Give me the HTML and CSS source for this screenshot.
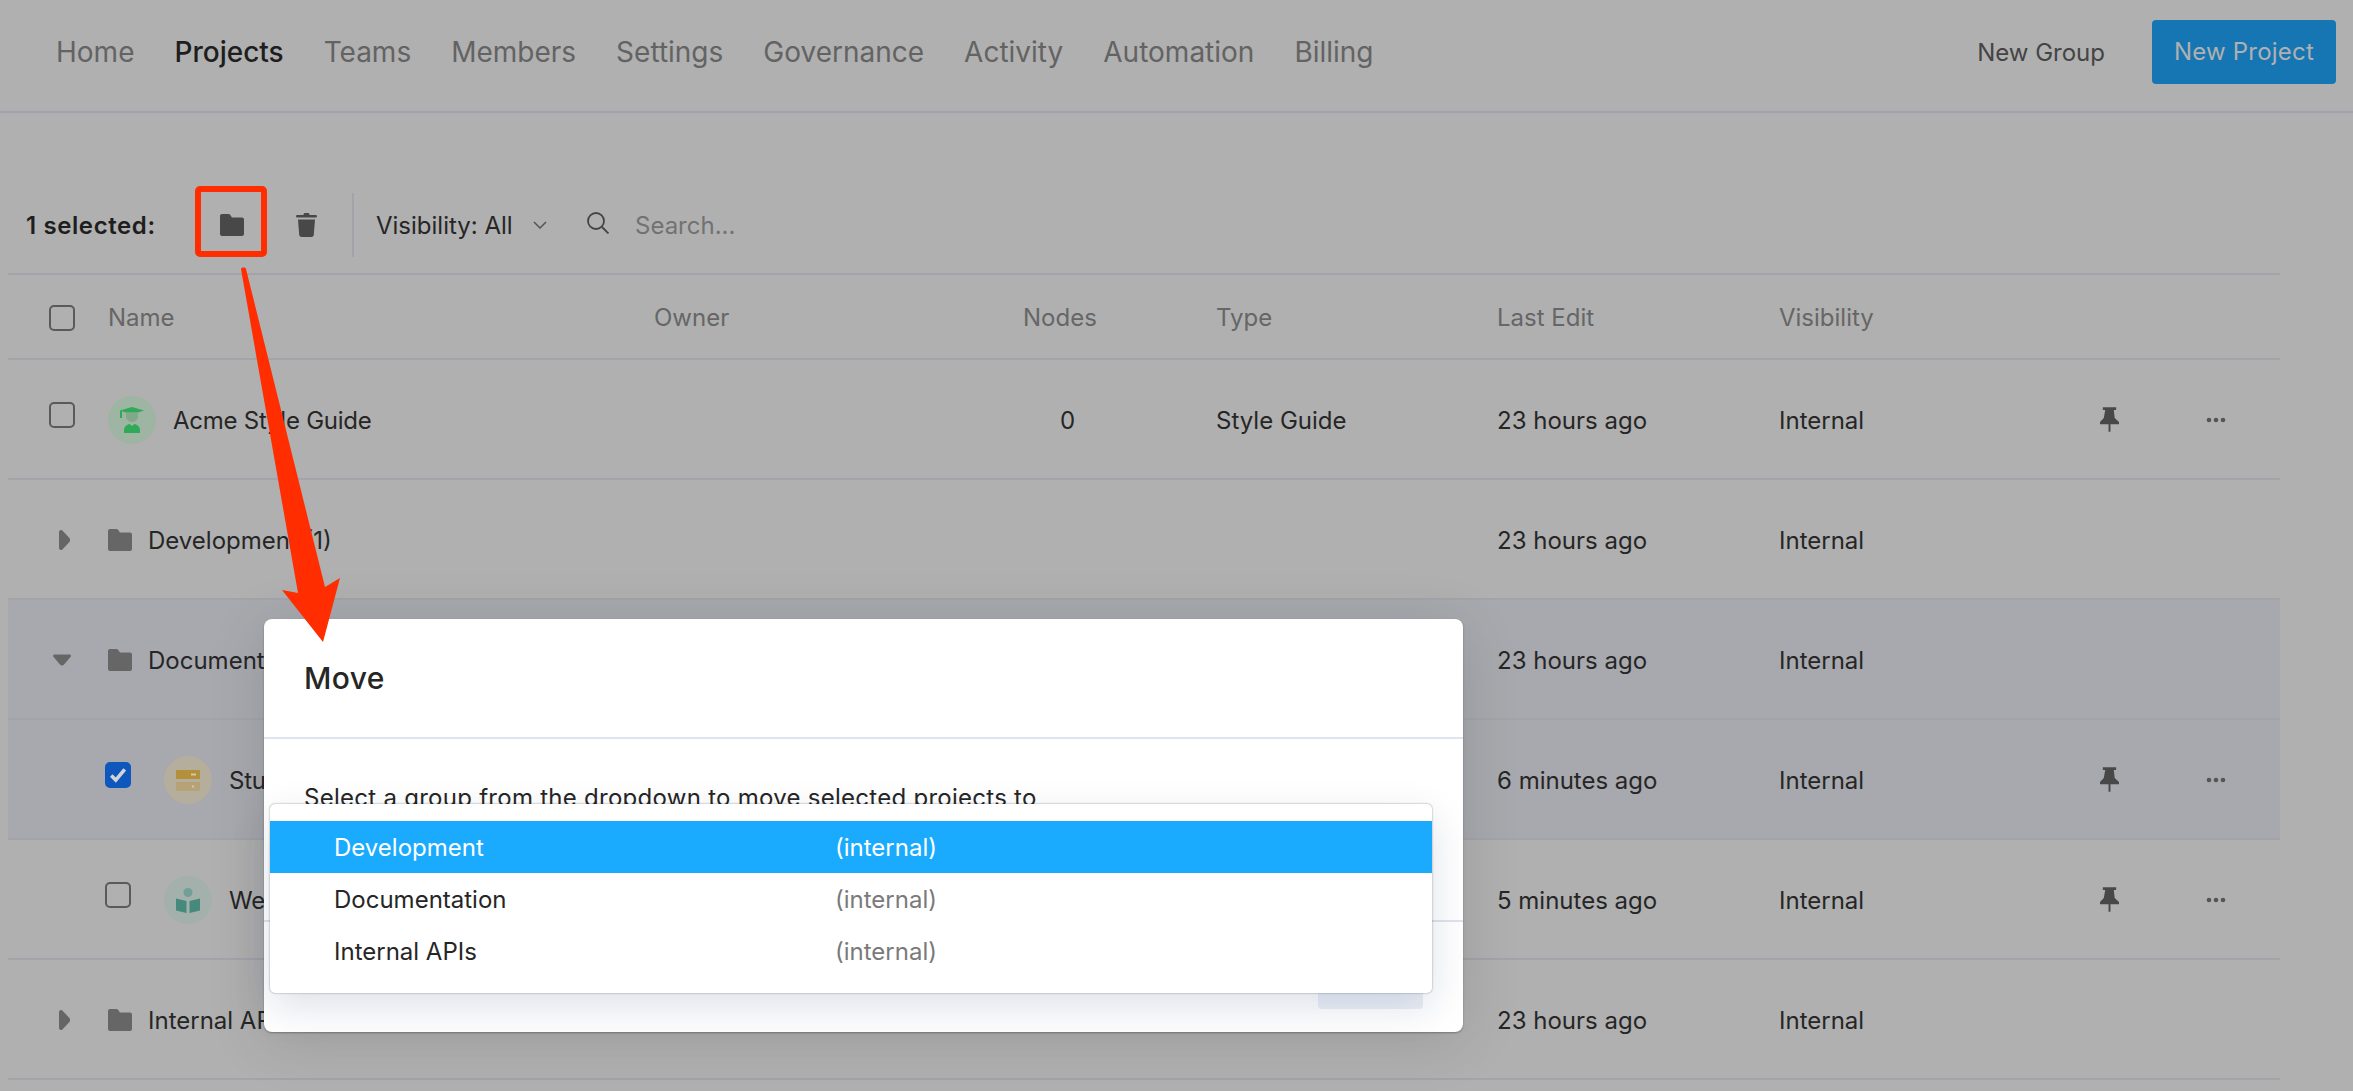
FILE: index.html
```html
<!DOCTYPE html>
<html lang="en">
<head>
    <meta charset="UTF-8">
    <title>Projects</title>
    <link rel="stylesheet" href="styles.css">
</head>
<body>
<svg class="icon-defs" aria-hidden="true">
    <symbol id="folder" viewBox="0 0 24 22"><path d="M2 0h6.500c.7 0 1.200.3 1.600.8L12 3.500h10c1.100 0 2 .9 2 2V20c0 1.100-.9 2-2 2H2c-1.100 0-2-.9-2-2V2C0 .9.900 0 2 0z"/></symbol>
    <symbol id="pin" viewBox="0 0 20 26"><path d="M3 0h14v3h-2.500l1 8.500L20 15.500V18H0v-2.500l4-4L5.500 3H3zM9 18h2v8H9z"/></symbol>
    <symbol id="caret-right" viewBox="0 0 11 20"><path d="M2 0c.5 0 1 .2 1.400.6l7 7.500c1 1.100 1 2.700 0 3.800l-7 7.500c-.4.4-.9.6-1.400.6-1.100 0-2-.9-2-2V2C0 .9.900 0 2 0z"/></symbol>
    <symbol id="caret-down" viewBox="0 0 20 12"><path d="M1.500 0h17c1.200 0 1.900 1.400 1.100 2.400l-7.500 8.800c-1.100 1.100-3.100 1.100-4.200 0L.4 2.400C-.4 1.400.300 0 1.500 0z"/></symbol>
    <symbol id="dots" viewBox="0 0 20 6"><circle cx="3" cy="3" r="2.300"/><circle cx="10" cy="3" r="2.300"/><circle cx="17" cy="3" r="2.300"/></symbol>
</svg>

<header class="topnav">
    <nav class="topnav-links">
        <a>Home</a>
        <a class="active">Projects</a>
        <a>Teams</a>
        <a>Members</a>
        <a>Settings</a>
        <a>Governance</a>
        <a>Activity</a>
        <a>Automation</a>
        <a>Billing</a>
    </nav>
    <div class="topnav-actions">
        <a class="btn-link">New Group</a>
        <a class="btn-primary">New Project</a>
    </div>
</header>

<main class="content">
    <div class="toolbar">
        <span class="selected-count">1 selected:</span>
        <svg class="icon tool-folder"><use href="#folder"/></svg>
        <svg class="tool-trash" viewBox="0 0 21 24"><path d="M7.500 1.500C7.500.7 8.200 0 9 0h3c.8 0 1.500.7 1.500 1.500V2h6c.8 0 1.500.5 1.500 1.200S20.300 4.500 19.500 4.500h-18C.7 4.500 0 3.900 0 3.200S.7 2 1.500 2h6zM2 6.500h17l-1.200 15.300c-.1 1.300-1 2.200-2.300 2.200H5.500c-1.300 0-2.200-.9-2.300-2.200z"/></svg>
        <span class="tool-divider"></span>
        <span class="visibility">Visibility: All</span>
        <svg class="chevron" viewBox="0 0 14 8"><path d="M1 1l6 6 6-6"/></svg>
        <svg class="search-icon" viewBox="0 0 22 22"><circle cx="9" cy="9" r="8"/><path d="M15 15l6.500 6.500"/></svg>
        <span class="search-placeholder">Search...</span>
    </div>

    <div class="row row-head">
        <div class="name-cell"><span class="check"></span><span class="head-name">Name</span></div>
        <div>Owner</div>
        <div>Nodes</div>
        <div>Type</div>
        <div>Last Edit</div>
        <div>Visibility</div>
    </div>

    <div class="row">
        <div class="name-cell">
            <span class="check"></span>
            <span class="avatar avatar-green">
                <svg viewBox="0 0 24 26"><path class="grad-face" d="M6 6h12v3c0 3.500-2.600 6-6 6S6 12.500 6 9z"/><path class="grad-main" d="M0 3.500L12 0l12 3.500L18 5.500H6L2 4.300V11H0zM4 26v-3c0-3.200 3-5.500 5.500-6l2.500 2 2.500-2c2.500.5 5.500 2.800 5.500 6v3z"/></svg>
            </span>
            <span class="avatar-name">Acme Style Guide</span>
        </div>
        <div></div>
        <div class="nodes">0</div>
        <div>Style Guide</div>
        <div>23 hours ago</div>
        <div>Internal</div>
        <svg class="icon pin"><use href="#pin"/></svg>
        <svg class="icon dots"><use href="#dots"/></svg>
    </div>

    <div class="row">
        <div class="name-cell">
            <svg class="icon caret-right"><use href="#caret-right"/></svg>
            <svg class="icon folder"><use href="#folder"/></svg>
            <span>Development (1)</span>
        </div>
        <div></div><div></div><div></div>
        <div>23 hours ago</div>
        <div>Internal</div>
    </div>

    <div class="row row-selected">
        <div class="name-cell">
            <svg class="icon caret-down"><use href="#caret-down"/></svg>
            <svg class="icon folder"><use href="#folder"/></svg>
            <span>Documentation (1)</span>
        </div>
        <div></div><div></div><div></div>
        <div>23 hours ago</div>
        <div>Internal</div>
    </div>

    <div class="row row-selected">
        <div class="name-cell nested">
            <span class="check checked">
                <svg viewBox="0 0 16 14"><path d="M2 7.500l4 4L14 2"/></svg>
            </span>
            <span class="avatar avatar-amber">
                <svg viewBox="0 0 24 21"><rect class="srv-top" width="24" height="9" rx="1"/><rect class="srv-bottom" y="12" width="24" height="9" rx="1"/><path class="srv-led" d="M15 3.500h5v2h-5zM16 15.500h2v2h-2z"/></svg>
            </span>
            <span class="avatar-name">Student Handbook</span>
        </div>
        <div></div><div></div><div></div>
        <div>6 minutes ago</div>
        <div>Internal</div>
        <svg class="icon pin"><use href="#pin"/></svg>
        <svg class="icon dots"><use href="#dots"/></svg>
    </div>

    <div class="row">
        <div class="name-cell nested">
            <span class="check"></span>
            <span class="avatar avatar-teal">
                <svg viewBox="0 0 24 25"><circle class="book-head" cx="12" cy="4.500" r="4.500"/><path class="book-main" d="M0 10.500l10.500 2.500v12L0 22.500zM24 10.500L13.500 13v12L24 22.500z"/></svg>
            </span>
            <span class="avatar-name">Welcome Guide</span>
        </div>
        <div></div><div></div><div></div>
        <div>5 minutes ago</div>
        <div>Internal</div>
        <svg class="icon pin"><use href="#pin"/></svg>
        <svg class="icon dots"><use href="#dots"/></svg>
    </div>

    <div class="row">
        <div class="name-cell">
            <svg class="icon caret-right"><use href="#caret-right"/></svg>
            <svg class="icon folder"><use href="#folder"/></svg>
            <span>Internal APIs (1)</span>
        </div>
        <div></div><div></div><div></div>
        <div>23 hours ago</div>
        <div>Internal</div>
    </div>
</main>

<div class="modal">
    <div class="modal-header">Move</div>
    <div class="modal-body">Select a group from the dropdown to move selected projects to</div>
    <div class="modal-footer"><span class="modal-btn"></span></div>
    <ul class="dropdown">
        <li class="dropdown-item active"><span>Development</span><span class="scope">(internal)</span></li>
        <li class="dropdown-item"><span>Documentation</span><span class="scope">(internal)</span></li>
        <li class="dropdown-item"><span>Internal APIs</span><span class="scope">(internal)</span></li>
    </ul>
</div>

<!-- annotation drawn on top of the screenshot -->
<svg class="annotation" viewBox="0 0 2353 1091">
    <rect x="198" y="189" width="66" height="65" rx="2"/>
    <path class="arrow" d="M241 269c0-2 5-2 5 0l79 318 15-9-17 64-41-52 16 3z"/>
</svg>
</body>
</html>
```

FILE: styles.css
```css
* {
  box-sizing: border-box;
}

body {
  margin: 0;
  width: 2353px;
  height: 1091px;
  overflow: hidden;
  position: relative;
  background-color: #b0b0b0;
  color: #262626;
  font-family: Inter, "Liberation Sans", sans-serif;
  font-size: 24px;
}

.icon-defs {
  display: none;
}

.icon {
  display: block;
  flex: none;
}

/* top navigation */
.topnav {
  height: 113px;
  padding: 20px 17px 0 56px;
  border-bottom: 2px solid #a0a3ad;
  display: flex;
  justify-content: space-between;
  align-items: flex-start;
}

.topnav-links {
  height: 64px;
  display: flex;
  align-items: center;
  gap: 40px;
  font-size: 28px;
  color: #636363;
}

.topnav-links .active {
  color: #1e1e1e;
  font-weight: 500;
}

.topnav-actions {
  display: flex;
  align-items: center;
  gap: 47px;
  height: 64px;
}

.btn-link {
  color: #444;
}

.btn-primary {
  width: 184px;
  height: 64px;
  line-height: 64px;
  text-align: center;
  background-color: #1676b3;
  color: #b0b0b0;
  border-radius: 4px;
  letter-spacing: 0.2px;
}

/* toolbar */
.content {
  margin-left: 8px;
  width: 2272px;
}

.toolbar {
  height: 162px;
  padding: 0 0 16px 18px;
  border-bottom: 2px solid #a3a4aa;
  display: flex;
  align-items: flex-end;
}

.toolbar > * {
  flex: none;
}

.selected-count {
  height: 64px;
  line-height: 66px;
  width: 194px;
  font-weight: 600;
  letter-spacing: 0.6px;
  color: #1e1e1e;
}

.tool-folder {
  width: 24px;
  height: 22px;
  margin-bottom: 21px;
  fill: #484848;
}

.tool-trash {
  width: 21px;
  height: 24px;
  margin: 0 35px 20px 52px;
  fill: #484848;
}

.tool-divider {
  width: 2px;
  height: 64px;
  background-color: #a3a4aa;
  margin-right: 22px;
}

.visibility {
  height: 64px;
  line-height: 66px;
  width: 157px;
}

.chevron {
  width: 14px;
  height: 8px;
  margin-bottom: 28px;
  fill: none;
  stroke: #555;
  stroke-width: 1.500;
}

.search-icon {
  width: 22px;
  height: 22px;
  margin: 0 26px 23px 40px;
  fill: none;
  stroke: #444;
  stroke-width: 1.800;
}

.search-placeholder {
  height: 64px;
  line-height: 66px;
  color: #727272;
}

/* table */
.row {
  height: 120px;
  padding-top: 2px;
  border-bottom: 2px solid #a3a4aa;
  display: grid;
  grid-template-columns: 646px 369px 193px 281px 282px 321px 106px 1fr;
  align-items: center;
}

.row-head {
  height: 85px;
  color: #666;
}

.row-selected {
  background-color: #a8a9ae;
}

.name-cell {
  padding-left: 51px;
  display: flex;
  align-items: center;
}

.name-cell.nested {
  padding-left: 97px;
}

.check {
  flex: none;
  width: 26px;
  height: 26px;
  margin-left: -10px;
  margin-bottom: 10px;
  border: 2px solid #5a5a5a;
  border-radius: 5px;
  display: flex;
  align-items: center;
  justify-content: center;
}

.row-head .check {
  margin-bottom: 0;
}

.name-cell.nested > .check {
  margin-left: 0;
}

.check.checked {
  background-color: #0d57bd;
  border-color: #0d57bd;
}

.check svg {
  width: 18px;
  height: 16px;
  fill: none;
  stroke: #d4d4d4;
  stroke-width: 3.200;
}

.head-name {
  margin-left: 33px;
}

.avatar {
  flex: none;
  width: 48px;
  height: 48px;
  margin-left: 33px;
  border-radius: 50%;
  display: flex;
  align-items: center;
  justify-content: center;
}

.avatar svg {
  width: 24px;
}

.avatar-name {
  margin-left: 17px;
  white-space: nowrap;
  letter-spacing: -0.25px;
}

.avatar-green {
  background-color: #9db5a2;
}

.grad-main {
  fill: #2eaa58;
}

.grad-face {
  fill: #82a88b;
}

.avatar-amber {
  background-color: #b5ae9c;
}

.srv-top {
  fill: #b5903a;
}

.srv-bottom {
  fill: #b5a377;
}

.srv-led {
  fill: #cfc7b0;
}

.avatar-teal {
  background-color: #a3b0ac;
}

.book-main {
  fill: #458a7c;
}

.book-head {
  fill: #73a096;
}

.caret-right {
  width: 11px;
  height: 20px;
  margin-right: 38px;
  fill: #666;
}

.caret-down {
  width: 18px;
  height: 12px;
  margin: 0 37px 0 -6px;
  fill: #666;
}

.folder {
  width: 24px;
  height: 22px;
  margin-right: 16px;
  fill: #666;
}

.nodes {
  padding-left: 37px;
}

.pin {
  width: 19px;
  height: 25px;
  margin-top: -1px;
  fill: #484848;
}

.dots {
  width: 20px;
  height: 6px;
  fill: #555;
}

/* move dialog */
.modal {
  position: absolute;
  left: 264px;
  top: 619px;
  width: 1199px;
  height: 413px;
  background-color: #fff;
  border-radius: 8px;
  box-shadow: 0 8px 60px rgba(0, 0, 0, 0.12), 0 1px 2px rgba(0, 0, 0, 0.3);
  display: flex;
  flex-direction: column;
}

.modal-header {
  height: 120px;
  padding: 41px 40px 0;
  border-bottom: 2px solid #dfe3ef;
  font-size: 30px;
  font-weight: 500;
  letter-spacing: 0.4px;
  color: #262626;
}

.modal-body {
  height: 181px;
  padding: 44px 40px 0;
  letter-spacing: 0.27px;
}

.modal-footer {
  flex: 1;
  border-top: 2px solid #dfe3ef;
  padding: 18px 40px 0 0;
  display: flex;
  justify-content: flex-end;
}

.modal-btn {
  width: 105px;
  height: 69px;
  background-color: #eceff7;
  border-radius: 4px;
}

.dropdown {
  position: absolute;
  left: 6px;
  top: 185px;
  width: 1162px;
  height: 189px;
  margin: 0;
  padding: 17px 0 0;
  list-style: none;
  background-color: #fff;
  border-radius: 5px;
  box-shadow: 0 14px 40px rgba(0, 40, 90, 0.14), 0 0 2px rgba(0, 0, 0, 0.45);
}

.dropdown-item {
  height: 52px;
  padding-left: 64px;
  display: flex;
  align-items: center;
}

.dropdown-item > span:first-child {
  width: 501px;
}

.scope {
  color: #7a7a7a;
}

.dropdown-item.active {
  background-color: #1aabff;
  color: #fff;
}

.dropdown-item.active .scope {
  color: #fff;
}

/* red markup */
.annotation {
  position: absolute;
  left: 0;
  top: 0;
  width: 2353px;
  height: 1091px;
  pointer-events: none;
}

.annotation rect {
  fill: none;
  stroke: #ff2d00;
  stroke-width: 6;
}

.arrow {
  fill: #ff2d00;
}
```
